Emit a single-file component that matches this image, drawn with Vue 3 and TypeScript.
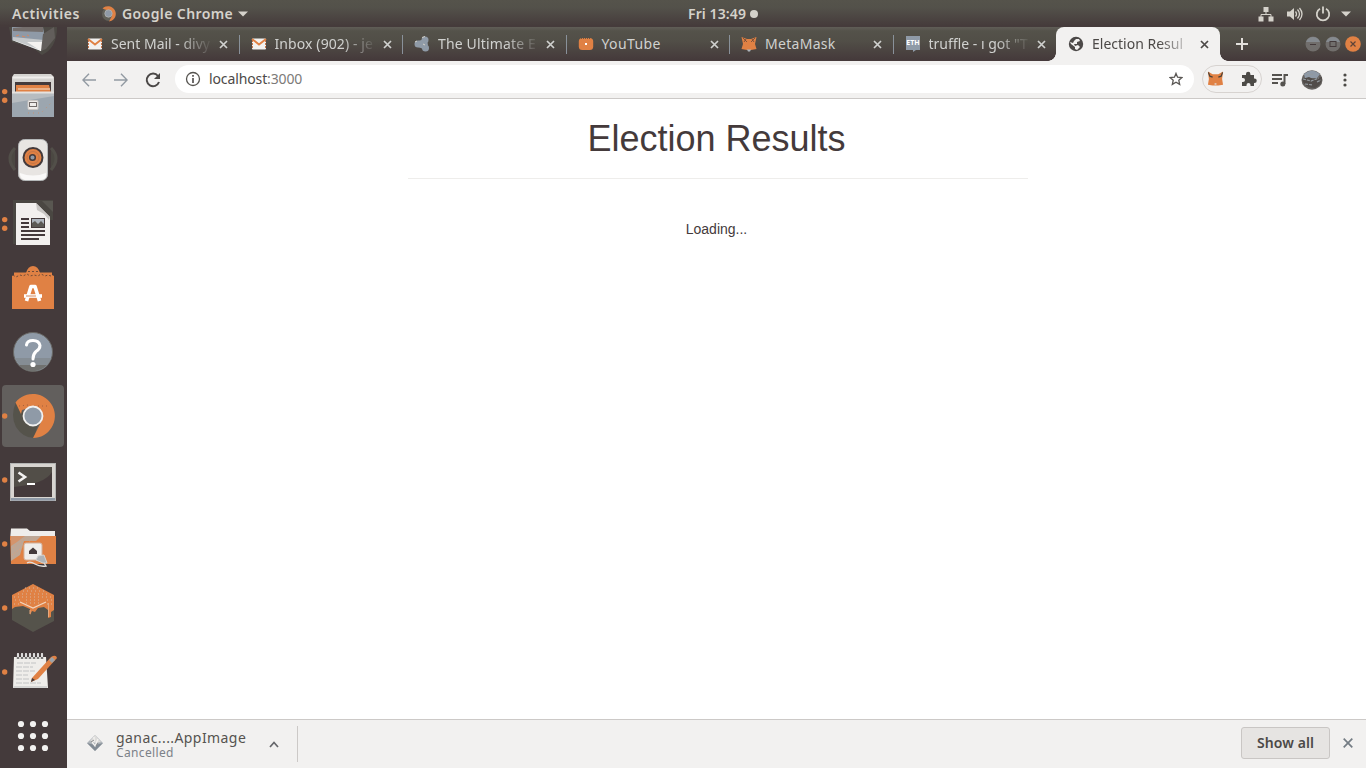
<script setup lang="ts">
interface Tab {
  title: string
  icon: string
  spacing: number
  fade: boolean
}

const tabs: Tab[] = [
  { title: 'Sent Mail - divy', icon: 'gmail', spacing: 0, fade: true },
  { title: 'Inbox (902) - je', icon: 'gmail', spacing: 0.1, fade: true },
  { title: 'The Ultimate E', icon: 'cloud', spacing: 0.15, fade: true },
  { title: 'YouTube', icon: 'youtube', spacing: 0.4, fade: false },
  { title: 'MetaMask', icon: 'fox', spacing: 0.3, fade: false },
  { title: 'truffle - ı got "T', icon: 'eth', spacing: 0, fade: true },
  { title: 'Election Resul', icon: 'globe', spacing: 0, fade: true }
]

interface DockItem {
  name: string
  dots: number
}

const dock: DockItem[] = [
  { name: 'drive', dots: 0 },
  { name: 'files', dots: 2 },
  { name: 'music', dots: 0 },
  { name: 'writer', dots: 2 },
  { name: 'software', dots: 0 },
  { name: 'help', dots: 0 },
  { name: 'chrome', dots: 1 },
  { name: 'terminal', dots: 1 },
  { name: 'folder', dots: 1 },
  { name: 'ganache', dots: 1 },
  { name: 'editor', dots: 1 },
  { name: 'apps', dots: 0 }
]
</script>

<template>
  <div class="desktop">
    <header class="topbar">
      <div class="top-left">
        <span class="activities">Activities</span>
        <svg class="top-chrome" width="16" height="16" viewBox="0 0 16 16">
          <circle cx="8" cy="8" r="7" fill="#626159" />
          <path d="M1.500 2.500A7.700 7.700 0 1 1 8 15.500L11 10L8 5Z" fill="#e08144" />
          <circle cx="7.500" cy="7.500" r="3.700" fill="#8f9aa7" stroke="#b3b2b0" stroke-width=".8" />
        </svg>
        <span class="appname">Google Chrome</span>
        <svg width="10" height="6" viewBox="0 0 10 6"><path d="M0 .5H10L5 5.500Z" fill="#d5d2cb" /></svg>
      </div>
      <div class="clock">Fri 13:49<i></i></div>
      <div class="status">
        <svg width="16" height="16" viewBox="0 0 16 16" fill="#d5d2cb">
          <path d="M5.500 1h5v5h-5zM.5 10.500h5v5h-5zM10.500 10.500h5v5h-5z" />
          <path d="M8 6v2.500M3 11V8.500H13V11" stroke="#d5d2cb" fill="none" />
        </svg>
        <svg class="vol" width="17" height="16" viewBox="0 0 17 16">
          <path d="M1 5.500H4L8 2V14L4 10.500H1Z" fill="#d5d2cb" />
          <path d="M9.500 5.500q2 2.500 0 5M11.500 3.500q4 4.500 0 9M13.500 2q5 6 0 12" fill="none" stroke="#d5d2cb" stroke-width="1.300" />
        </svg>
        <svg class="power" width="16" height="16" viewBox="0 0 16 16" fill="none" stroke="#d5d2cb" stroke-width="1.800">
          <path d="M5 2.700A6.200 6.200 0 1 0 11 2.700M8 .5V7.500" />
        </svg>
        <svg class="arrow" width="10" height="6" viewBox="0 0 10 6"><path d="M0 .5H10L5 5.500Z" fill="#d5d2cb" /></svg>
      </div>
    </header>

    <div class="workspace">
      <nav class="dock">
        <div class="dock-list">
          <svg v-for="item in dock" :key="item.name" width="67" height="64" viewBox="0 0 67 64">
            <rect v-if="item.name === 'chrome'" x="2" y="1" width="62" height="62" rx="4" fill="#625f5d" />
            <g fill="#e08144">
              <circle v-if="item.dots === 1" cx="4.700" cy="32" r="2.700" />
              <template v-if="item.dots === 2">
                <circle cx="4.700" cy="27.600" r="2.700" />
                <circle cx="4.700" cy="36.200" r="2.700" />
              </template>
            </g>

            <g v-if="item.name === 'drive'">
              <path d="M9 27H57Q57 48 42 55L33 48L12 42Z" fill="#4d4a45" />
              <path d="M12 27H43L45 39L41 51L12 40Z" fill="#8f9aa7" />
              <path d="M12 40L44 42L41 51Z" fill="#f1efed" />
              <path d="M23 27H43V32L13 31V28Z" fill="#746e6c" />
              <path d="M13 37L44 40V45L38 49L13 40Z" fill="#c5c8ca" />
              <path d="M27 42L44 42L41 51Z" fill="#f4f2f0" />
              <path d="M43 34L54 27L55 38L46 49L41 51Z" fill="#625e5b" />
              <path d="M16 36l3-1M22 36l3 1M27 35l2 1" stroke="#d38962" />
            </g>

            <g v-else-if="item.name === 'files'">
              <path d="M14 10H51L54 13V53H12V13Z" fill="#d5d3d0" />
              <path d="M13 13.500H53" stroke="#efedeb" stroke-width="2" />
              <rect x="15" y="18" width="36" height="11" fill="#443a3b" />
              <path d="M16 21H49L51 29H16Z" fill="#e08144" />
              <path d="M18 25H50" stroke="#f0c7a8" stroke-width="1.400" />
              <path d="M12 28H54V53H12Z" fill="#9ca6af" />
              <path d="M12 28H54V32L12 39Z" fill="#b7bcc0" />
              <path d="M12 28.500H54" stroke="#e6e2de" stroke-width="2" />
              <path d="M28 49H41L51 39" stroke="#c49275" stroke-width="1" stroke-dasharray="1 4" fill="none" />
              <rect x="28" y="36.500" width="10" height="9" rx="1" fill="#efedeb" stroke="#cbc7c4" />
              <rect x="29.500" y="38.500" width="7" height="4" fill="#efedeb" stroke="#716b69" />
            </g>

            <g v-else-if="item.name === 'music'">
              <path d="M15 20Q5 30 15 42M51 20Q61 30 51 42" fill="#4b4842" stroke="#524f49" stroke-width="3" />
              <rect x="18.500" y="11.500" width="29" height="41" rx="6" fill="#e8e5e2" stroke="#b4b7b8" />
              <path d="M20 45Q33 50 46 45V49Q44 52 40 52H25Q21 51 20 47Z" fill="#faf9f8" />
              <circle cx="33" cy="29.500" r="9.500" fill="#e08144" stroke="#443a3b" stroke-width="2" />
              <circle cx="33" cy="29.500" r="6" fill="none" stroke="#b87048" stroke-width=".7" />
              <circle cx="32.500" cy="29.500" r="2.800" fill="#8f9aa7" stroke="#443a3b" stroke-width="1.500" />
            </g>

            <g v-else-if="item.name === 'writer'">
              <path d="M13 8H53V28H50V52H13Z" fill="#4a4742" />
              <path d="M16 11H36L50 25V53H16Z" fill="#f2f0ee" />
              <path d="M36 11L50 25L49 28L44 22L37 18Z" fill="#c9c7c4" />
              <path d="M42 9H53V20Z" fill="#595751" />
              <path d="M21 27h8M21 31h8M21 35h8M21 39h24M21 43h24M21 47h18" stroke="#443a3b" stroke-width="2" />
              <rect x="31.500" y="26.500" width="13" height="9" fill="#aeb5bd" stroke="#443a3b" />
              <path d="M32 35V31L35 29L38 32L41 29L44 32V35Z" fill="#5c5a55" />
            </g>

            <g v-else-if="item.name === 'software'">
              <path d="M26 17Q28 10 33 10T40 17V20H26Z" fill="#e08144" />
              <path d="M14 16.500H52V19L54 20V53H12V20L14 19Z" fill="#e08144" />
              <path d="M28 15.500H38M13 19l3 2 4-2 3 1 4-2 3 2 4-1 4 1 3-2 4 2 3-1 3 1" stroke="#714c38" fill="none" stroke-dasharray="2 2" />
              <path d="M26.500 45L31 30.500H35L39.500 45" stroke="#fff" stroke-width="3.600" fill="none" stroke-linejoin="round" />
              <path d="M24 40H42" stroke="#fff" stroke-width="3.600" />
              <path d="M26 40H36" stroke="#d28a61" stroke-width="1" />
            </g>

            <g v-else-if="item.name === 'help'">
              <circle cx="33" cy="32" r="19.500" fill="#8f9aa7" stroke="#686764" />
              <path d="M15 38H51Q47 51 33 51Q20 50 15 38Z" fill="#858d94" />
              <path d="M19 45H47Q40 52 30 51Q23 50 19 45Z" fill="#70716f" />
              <path d="M26.500 25Q27 20.500 33 20.500T40 25.500Q40 29 36 31.500Q33 34 33 39" fill="none" stroke="#fff" stroke-width="3" stroke-linecap="round" />
              <circle cx="33" cy="44.500" r="2.600" fill="#fff" />
            </g>

            <g v-else-if="item.name === 'chrome'">
              <path d="M16 18Q10 32 16 43Q23 54 34 54L38 40L22 27Z" fill="#55534b" />
              <path d="M15.500 18.500A22 22 0 1 1 33 54L42 36L36 22L22 26L21 30Z" fill="#e08144" />
              <path d="M19 22L28 21M34 22H50" stroke="#a35f3d" stroke-dasharray="1 3" />
              <circle cx="33" cy="32" r="9.500" fill="#8f9aa7" stroke="#f2f1f0" stroke-width="1.800" />
            </g>

            <g v-else-if="item.name === 'terminal'">
              <rect x="10.500" y="15.500" width="45" height="37" fill="#d8d5d1" stroke="#b4b5b4" />
              <path d="M11 50H55V52.500H11Z" fill="#8f9aa7" />
              <rect x="14" y="19" width="38" height="30" fill="#443a3b" />
              <path d="M14 19H52V24Q45 36 14 39Z" fill="#524e48" />
              <path d="M18.500 24.500L25 29L18.500 33.500" fill="none" stroke="#f4f2f1" stroke-width="2.600" />
              <path d="M27 36H35" stroke="#fff" stroke-width="2" />
            </g>

            <g v-else-if="item.name === 'folder'">
              <path d="M11 16.500H27L30 19H55V28H10Z" fill="#efedeb" />
              <path d="M10 24H56V52H11Z" fill="#e08144" />
              <path d="M11 24H41L36 29H24L20 43L11 49Z" fill="#bda796" />
              <path d="M11 24H25L17 30L11 34Z" fill="#d4946c" />
              <path d="M13 36L25 26M12 43L36 25" stroke="#dfa17a" stroke-dasharray="1 2" />
              <rect x="24" y="31" width="18" height="17" rx="2" fill="#efedeb" stroke="#d1b29d" />
              <path d="M29 39L33 35.500L37 39V42H29Z" fill="#443a3b" />
              <path d="M27 51Q30 49 35 52T46 54L44 51" fill="none" stroke="#e4e2df" stroke-width="1.300" />
              <path d="M38 44L44 43L47 51L43 51L36 48Z" fill="#aeb3b7" stroke="#d5d3d0" />
            </g>

            <g v-else-if="item.name === 'ganache'">
              <path d="M12 20L33 8L54 20V45L33 56L12 44Z" fill="#55534b" />
              <path d="M33 8L54 19V34L51 36V41L48 42V34L44 31L38 32L35 36L32 35L30 39V33L23 30L15 31L12 33V19Z" fill="#e08144" />
              <path d="M20 26L33 32L46 26" fill="none" stroke="#f2d5be" stroke-width="1.300" />
              <path d="M23 15H44M18 18H49M14 21H52M25 12H41M15 24H20M47 24H53M26 27H41M14 28H20M47 28H53M26 24H42" stroke="#d8b69d" stroke-dasharray="1 3" />
              <path d="M48.500 27V41M30 34V38" stroke="#e5a97f" stroke-width="1" />
            </g>

            <g v-else-if="item.name === 'editor'">
              <path d="M14 17H46L48 48H13Z" fill="#efedea" />
              <path d="M14 46H47V48H13Z" fill="#d5d5d4" />
              <path d="M18 14v5M22 14v5M26 14v5M30 14v5M34 14v5M38 14v5M42 14v5" stroke="#777675" stroke-width="2.400" />
              <path d="M18 13v4M22 13v4M26 13v4M30 13v4M34 13v4M38 13v4M42 13v4" stroke="#f7f6f5" stroke-width="1.600" />
              <path d="M17 23H36M16 27H33M16 31H35M16 35H28M16 39H29M16 43H41" stroke="#c2c3c4" stroke-dasharray="6 1" />
              <path d="M32 38L51 17Q56 14 57 18L38 39L31 42Z" fill="#e08144" />
              <path d="M49 20L52 17L55 20L52 23Z" fill="#9aa3ab" />
              <path d="M32 38L31 42L35 40Z" fill="#443a3b" />
            </g>

            <g v-else fill="#f2f1f0">
              <circle v-for="n in 9" :key="n" :cx="21 + ((n - 1) % 3) * 12" :cy="20 + Math.floor((n - 1) / 3) * 12" r="3.100" />
            </g>
          </svg>
        </div>
      </nav>

      <main class="browser">
        <div class="tabstrip">
          <div v-for="(tab, i) in tabs" :key="tab.title" class="tab" :class="{ active: i === 6, last: i === 5 }">
            <svg class="favicon" width="16" height="16" viewBox="0 0 16 16">
              <g v-if="tab.icon === 'gmail'">
                <rect x="1" y="2.500" width="14" height="11" rx="1" fill="#f2f1f0" />
                <path d="M1 3L8 8.500L15 3" fill="none" stroke="#e08144" stroke-width="1.900" />
                <path d="M1.500 4V13M14.500 4V13" stroke="#c9774b" stroke-dasharray="2 1" />
              </g>
              <g v-else-if="tab.icon === 'cloud'" fill="#8f9aa7">
                <circle cx="11" cy="4" r="3.500" /><circle cx="4" cy="8" r="3.500" /><circle cx="11.500" cy="12" r="3.500" />
                <path d="M4 5L11 3L14 8L12 14L4 11Z" /><path d="M8 1.500L11 .5M1 6l2-1M9 8l2 1" stroke="#d5d2cb" />
              </g>
              <g v-else-if="tab.icon === 'youtube'">
                <rect x=".8" y="2" width="14.400" height="12" rx="3.500" fill="#e08144" />
                <path d="M3 2.500H13" stroke="#705540" stroke-dasharray="1 1" />
                <rect x="7" y="7" width="2" height="2" fill="#fff" />
              </g>
              <g v-else-if="tab.icon === 'fox'">
                <path d="M.5 1L6 3H10L15.500 1L14 8L15.500 13L10 14H6L.5 13L2 8Z" fill="#e08144" />
                <path d="M2 2L6 6M5 3L3 6M14 2L10 6M11 3L13 6" stroke="#684838" stroke-width=".8" />
                <path d="M6 13.500H10L9 15.500H7Z" fill="#aeb5bd" />
              </g>
              <g v-else-if="tab.icon === 'eth'">
                <path d="M1 0H15V14H11L8 16V14H1Z" fill="#8f9aa7" />
                <text x="8" y="9.200" text-anchor="middle" font-family="Open Sans, sans-serif" font-weight="700" font-size="7" fill="#fff">ETH</text>
              </g>
              <g v-else>
                <circle cx="8" cy="8" r="7.200" fill="#4c4948" />
                <path d="M8 3H11L12 5L9 6V8H6L7 10L10 9L12 11L9 14L7 13V11L3 8L2 6L5 7L6 5Z" fill="#f2f1f0" />
              </g>
            </svg>
            <span class="tab-title" :class="{ fade: tab.fade }" :style="{ letterSpacing: tab.spacing + 'px' }">{{ tab.title }}</span>
            <svg class="close" width="9" height="9" viewBox="0 0 9 9"><path d="M1 1L8 8M8 1L1 8" stroke="currentColor" stroke-width="1.700" /></svg>
          </div>
          <svg class="plus" width="12" height="12" viewBox="0 0 12 12"><path d="M6 0V12M0 6H12" stroke="#e3e0dc" stroke-width="2" /></svg>
          <div class="window-buttons">
            <svg width="16" height="16" viewBox="0 0 16 16"><circle cx="8" cy="8" r="7.500" fill="#716e6c" /><path d="M1 6Q3 1 8 1T15 6Z" fill="#858a8f" /><path d="M5 8.500H11" stroke="#443a3b" /></svg>
            <svg width="16" height="16" viewBox="0 0 16 16"><circle cx="8" cy="8" r="7.500" fill="#716e6c" /><path d="M1 6Q3 1 8 1T15 6Z" fill="#858a8f" /><rect x="5" y="5.500" width="6" height="5" fill="none" stroke="#443a3b" /></svg>
            <svg width="16" height="16" viewBox="0 0 16 16"><circle cx="8" cy="8" r="7.800" fill="#e08144" /><path d="M5.500 5.500L10.500 10.500M10.500 5.500L5.500 10.500" stroke="#5c4338" stroke-width="1.200" /></svg>
          </div>
        </div>

        <div class="toolbar">
          <svg class="back" width="14" height="14" viewBox="0 0 14 14" fill="none" stroke="#929aa2" stroke-width="1.400"><path d="M14 7H1M7 .8L.9 7L7 13.200" /></svg>
          <svg class="forward" width="14" height="14" viewBox="0 0 14 14" fill="none" stroke="#929aa2" stroke-width="1.400"><path d="M0 7H13M7 .8L13.100 7L7 13.200" /></svg>
          <svg class="reload" width="16" height="16" viewBox="0 0 16 16"><path d="M13 4A6.300 6.300 0 1 0 14 10" fill="none" stroke="#4b4847" stroke-width="2" /><path d="M15 1V7H9Z" fill="#4b4847" /></svg>
          <div class="omnibox">
            <svg width="16" height="16" viewBox="0 0 16 16"><circle cx="8" cy="8" r="6.500" fill="none" stroke="#55534f" stroke-width="1.300" /><path d="M8 7V12M8 4V5.700" stroke="#4b4847" stroke-width="1.600" /></svg>
            <span class="url">localhost<span>:3000</span></span>
            <svg class="star" width="14" height="14" viewBox="0 0 16 16"><path d="M8 1.600L9.800 6L14.700 6.400L11.200 9.500L12.200 14.200L8 11.700L3.800 14.200L4.800 9.500L1.300 6.400L6.200 6Z" fill="none" stroke="#5a5754" stroke-width="1.500" /></svg>
          </div>
          <div class="extensions">
            <svg width="17" height="16" viewBox="0 0 18 16"><path d="M1 0L6 3H12L17 0L16 8L17 14L12 15H6L1 14L2 8Z" fill="#e08144" /><path d="M1.500 1L3 5L6 6M16.500 1L15 5L12 6" stroke="#4b4238" stroke-width="1.300" fill="none" /><path d="M8 12.500H10V14H8Z" fill="#e0ddd9" /></svg>
            <svg width="16" height="16" viewBox="0 0 16 16"><path d="M1 4H5V3A2.200 2.200 0 0 1 9.400 3V4H13V7.500H13.500A2 2 0 0 1 13.500 12H13V15H9.500V14A2 2 0 0 0 5.500 14V15H1V11H2A2 2 0 0 0 2 7H1Z" fill="#4c4a46" /></svg>
          </div>
          <svg class="playlist" width="16" height="14" viewBox="0 0 16 14"><path d="M0 2H10M0 6H10M0 10H6" stroke="#55534f" stroke-width="1.800" /><path d="M12.500 11V2H16" fill="none" stroke="#55534f" stroke-width="2" /><circle cx="10.800" cy="11" r="2.500" fill="#55534f" /></svg>
          <svg class="avatar" width="22" height="20" viewBox="0 0 22 20"><ellipse cx="11" cy="10" rx="10.500" ry="9.700" fill="#666360" /><path d="M3 4Q11-3 19 4L16 8H4Z" fill="#8f9aa7" /><path d="M1 9L8 7L12 9L21 7Q21 15 14 18Q3 18 1 9Z" fill="#514c49" /><path d="M2 9L10 11L18 8M4 14L12 15M5 5L13 4M16 12L20 10" stroke="#939a9f" stroke-width="1.200" stroke-dasharray="3 1" fill="none" /></svg>
          <svg class="menu" width="4" height="14" viewBox="0 0 4 14" fill="#4c4a46"><circle cx="2" cy="2" r="1.600" /><circle cx="2" cy="7" r="1.600" /><circle cx="2" cy="12" r="1.600" /></svg>
        </div>

        <section class="page">
          <h1>Election Results</h1>
          <hr />
          <p>Loading...</p>
        </section>

        <footer class="downloads">
          <svg class="file-icon" width="18" height="18" viewBox="0 0 18 18"><path d="M9 1L17 9L9 17L1 9Z" fill="#aeb4b9" /><path d="M9 1L15 8L9 9L4 7Z" fill="#dddcda" /><path d="M1 9L9 11L17 9L9 17Z" fill="#828b94" /><path d="M6 8L9 12L12 5M8 3V8" fill="none" stroke="#f5f3f1" stroke-width="1.300" /><path d="M8 6L5 8M10 12L12 9" stroke="#8b8c8d" /></svg>
          <div class="download-text"><span class="filename">ganac....AppImage</span><span class="state">Cancelled</span></div>
          <svg class="chevron" width="10" height="7" viewBox="0 0 10 7"><path d="M1 6L5 1.500L9 6" fill="none" stroke="#65666a" stroke-width="1.700" /></svg>
          <i class="divider"></i>
          <button>Show all</button>
          <svg class="dismiss" width="10" height="10" viewBox="0 0 10 10"><path d="M.7.700L9.300 9.300M9.300.700L.7 9.300" stroke="#747c84" stroke-width="1.700" /></svg>
        </footer>
      </main>
    </div>
  </div>
</template>

<style>
body {
  margin: 0;
  overflow: hidden;
}
</style>

<style scoped>
.desktop {
  width: 1366px;
  height: 768px;
  display: flex;
  flex-direction: column;
  overflow: hidden;
  font-family: "Noto Sans", "Open Sans", sans-serif;
}
svg { display: block; flex: none; }
.topbar {
  height: 27px;
  flex: none;
  display: grid;
  grid-template-columns: 676px auto 1fr;
  align-items: center;
  background: linear-gradient(#55534b 0, #53514a 28%, #453b3b 95%);
  color: #d5d2cb;
  font-size: 14px;
  font-weight: 600;
  line-height: 27px;
}
.top-left { display: flex; align-items: center; padding-left: 12px; }
.activities { width: 69px; white-space: nowrap; letter-spacing: .55px; }
.top-chrome { margin: 0 5px 0 20px; }
.appname { width: 111px; white-space: nowrap; letter-spacing: .4px; margin-right: 5px; }
.clock { display: flex; align-items: center; padding-left: 12px; font-size: 14px; line-height: 26px; letter-spacing: .1px; }
.clock i { width: 8px; height: 8px; border-radius: 50%; background: #d5d2cb; margin-left: 4px; }
.status { display: flex; justify-content: flex-end; align-items: center; padding-right: 15px; }
.vol { margin-left: 12px; }
.power { margin-left: 12px; }
.arrow { margin-left: 10px; }
.workspace { display: flex; flex: 1; min-height: 0; }
.dock { width: 67px; flex: none; background: #443a3b; overflow: hidden; }
.dock-list { margin-top: -27px; }
.browser { width: 1299px; display: flex; flex-direction: column; background: #fff; }
.tabstrip {
  height: 34px;
  flex: none;
  display: flex;
  align-items: center;
  padding-left: 8px;
  background: linear-gradient(#605d57 0, #54524a 12%, #514e47 42%, #453a3b 96%);
}
.tab {
  width: 163.500px;
  height: 34px;
  flex: none;
  display: flex;
  align-items: center;
  box-sizing: border-box;
  padding-left: 12px;
  position: relative;
  color: #d0d1cf;
}
.tab::after { content: ""; position: absolute; right: -1px; top: 8px; height: 19px; width: 1px; background: #89919a; }
.tab.last::after, .tab.active::after { display: none; }
.tab.active { background: #f2f1f0; color: #4c4947; border-radius: 8px 8px 0 0; }
.tab.active::before {
  content: "";
  position: absolute;
  left: -8px;
  right: -8px;
  bottom: 0;
  height: 8px;
  background: radial-gradient(circle at 0 0, transparent 7.500px, #f2f1f0 8px) left / 8px 8px no-repeat,
    radial-gradient(circle at 100% 0, transparent 7.500px, #f2f1f0 8px) right / 8px 8px no-repeat;
}
.tab-title { width: 105px; margin-left: 8px; white-space: nowrap; font-size: 14px; line-height: 22px; }
.fade { -webkit-mask-image: linear-gradient(90deg, #000 64%, transparent 97%); mask-image: linear-gradient(90deg, #000 64%, transparent 97%); }
.close { margin-left: 3px; }
.plus { margin-left: 16px; }
.window-buttons { display: flex; gap: 4px; margin-left: auto; padding-right: 5px; }
.toolbar {
  height: 38px;
  flex: none;
  box-sizing: border-box;
  display: flex;
  align-items: center;
  background: #f2f1f0;
  border-bottom: 1px solid #ccc9c7;
  padding-left: 15px;
}
.forward { margin-left: 18px; }
.reload { margin-left: 17px; }
.omnibox {
  width: 1019px;
  height: 28px;
  margin-left: 14px;
  box-sizing: border-box;
  padding: 0 11px 0 10px;
  border-radius: 14px;
  background: #fff;
  display: flex;
  align-items: center;
  position: relative;
  top: -.5px;
}
.url { margin-left: 8px; color: #4c4947; font-size: 14px; line-height: 20px; letter-spacing: -.12px; }
.url span { color: #7c7a78; }
.star { margin-left: auto; }
.extensions { width: 60px; height: 28px; margin: -1px 0 0 8px; box-sizing: border-box; border: 1px solid #d7d3d0; border-radius: 14px; display: flex; align-items: center; justify-content: space-between; padding: 0 4px; }
.playlist { margin-left: 10px; }
.avatar { margin-left: 13px; }
.menu { margin-left: 20px; }
.page { flex: 1; min-height: 0; text-align: center; font-family: "Liberation Sans", Arial, sans-serif; color: #443a3b; }
h1 { margin: 20px 0 0; font-size: 36px; line-height: 39.600px; font-weight: 400; }
hr { width: 620px; height: 1px; margin: 19px auto 0; border: 0; background: #eeedeb; position: relative; left: 1px; }
p { margin: 40px 0 0; font-size: 14px; line-height: 20px; }
.downloads { height: 49px; flex: none; box-sizing: border-box; border-top: 1px solid #ccc9c7; background: #f2f1f0; display: flex; align-items: center; padding-left: 19px; }
.file-icon { margin-top: -2px; }
.download-text { width: 131px; margin-left: 12px; display: flex; flex-direction: column; }
.filename { color: #55534f; font-size: 14px; line-height: 17px; letter-spacing: .42px; white-space: nowrap; }
.state { color: #7c8188; font-size: 12px; line-height: 13px; letter-spacing: .35px; }
.chevron { margin-left: 22px; }
.divider { width: 1px; height: 36px; background: #ccc9c7; margin-left: 18px; }
button { width: 89px; height: 32px; margin: -2px 0 0 auto; padding: 0 0 2px; border: 1px solid #c9c6c4; border-radius: 3px; background: #e6e4e2; color: #4c4947; font: 600 14px "Noto Sans", sans-serif; letter-spacing: .1px; }
.dismiss { margin: -2px 13px 0; }
</style>
